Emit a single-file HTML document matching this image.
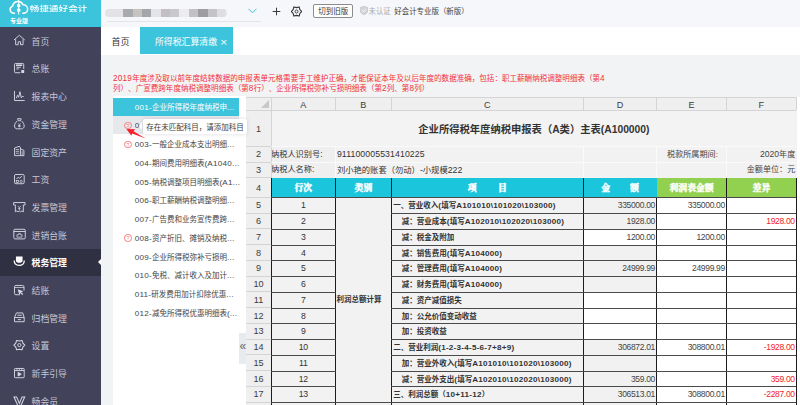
<!DOCTYPE html>
<html lang="zh-CN">
<head>
<meta charset="utf-8">
<title>所得税汇算清缴</title>
<style>
*{box-sizing:border-box;margin:0;padding:0}
html,body{width:800px;height:405px;overflow:hidden;background:#f2f3f5;text-spacing-trim:space-all;font-family:"Liberation Sans","Noto Sans CJK SC",sans-serif;-webkit-text-size-adjust:none}
body{position:relative;color:#333}
.abs{position:absolute}
#side{position:absolute;left:0;top:0;width:101px;height:405px;background:#42425b}
#logo{position:absolute;left:0;top:0;width:101px;height:27px;background:#3cc4dc;color:#fff}
#logo .t1{position:absolute;left:29.8px;top:3.1px;font-size:9.5px;font-weight:500;line-height:11px;white-space:nowrap;letter-spacing:0.1px;transform:scaleY(.76);transform-origin:0 50%}
#logo .t2{position:absolute;left:10px;top:16.5px;font-size:6px;font-weight:700;line-height:8px;white-space:nowrap}
.mi{position:absolute;left:0;width:101px;height:27.7px;color:#c6c7d5;font-size:8.85px;line-height:27.7px;white-space:nowrap}
.mi span{position:absolute;left:31.6px;top:1.6px}
.mi svg{position:absolute;left:13.8px;top:8.3px;width:10.7px;height:10.2px;stroke:#d6d7e2;fill:none;stroke-width:1;overflow:visible}
.mi.on{background:#2f3042;color:#fff;font-weight:700}
.mi.on svg{stroke:#fff}
.mi.on:after{content:"";position:absolute;right:0;top:10.4px;border:3.2px solid transparent;border-right:3.8px solid #fff;border-left:0}
#top{position:absolute;left:101px;top:0;width:699px;height:27px;background:#f5f7fa}
#top .b{position:absolute;top:8.5px;height:8.5px;filter:blur(.7px)}
#top .btn{position:absolute;left:212.3px;top:3.6px;width:40px;height:14.8px;border:1px solid #8c8c8c;border-radius:2px;font-size:7.5px;line-height:13.8px;text-align:center;color:#333;background:#fff;white-space:nowrap}
#top .t{position:absolute;top:0;line-height:23px;font-size:7.45px;white-space:nowrap}
#tabs{position:absolute;left:101px;top:27px;width:699px;height:27.6px;background:#fff}
#tabs .home{position:absolute;left:10.5px;top:0;line-height:30.2px;font-size:9px;color:#333}
#tabs .act{position:absolute;left:39px;top:0;width:93px;height:26.6px;background:#3cc4dc;color:#fff;font-size:8.9px;line-height:30.2px;overflow:hidden;padding-left:15px;white-space:nowrap}
#tabs .act i{font-style:normal;font-size:9.5px;margin-left:2.5px;line-height:10px;font-family:"DejaVu Sans",sans-serif}
.warn{position:absolute;left:113px;top:73.5px;width:520px;font-size:7.56px;line-height:10.7px;color:#f3303a;white-space:nowrap}
#list{position:absolute;left:113.2px;top:96px;width:132.6px;height:309px;background:#fff}
.li{position:absolute;left:0;width:125.8px;height:18.73px;line-height:20.8px;font-size:7.5px;color:#444;white-space:nowrap}
.li span{position:absolute;left:21.5px;top:0}
.li span span{position:static}
.li.hov>span{width:4.9px;overflow:hidden}
.li.on{background:#3cc4dc;color:#fff}
.li.hov{background:#e6e8eb;height:17.6px;margin-top:-.1px}
.q{position:absolute;left:11.1px;top:5.4px;width:7.4px;height:7.4px;border:0.7px solid #f9797d;border-radius:50%;color:#f9797d;font-size:5.2px;line-height:6.2px;text-align:center;font-style:normal}
#tip{position:absolute;left:142.7px;top:119.2px;width:104.8px;height:14.9px;background:#fff;border-radius:2px;box-shadow:0 0 4px rgba(0,0,0,.15);font-size:7.5px;line-height:17.2px;color:#3c3c3c;padding-left:3.5px;white-space:nowrap}
#tip:before{content:"";position:absolute;left:-3.7px;top:3px;border:4.5px solid transparent;border-right:3.8px solid #fff;border-left:0}
#hand{position:absolute;left:239.2px;top:332.5px;width:6.8px;height:31.5px;background:#e8ebee;color:#666;font-size:12px;line-height:27.8px;text-align:left;text-indent:.2px;letter-spacing:-1px;z-index:3}
#sheet{position:absolute;left:246px;top:97px;width:554px;height:308px;background:#f2f2f2;overflow:hidden}
#sheet div{position:absolute;font-size:7.5px;color:#333;white-space:nowrap;overflow:hidden}
#sheet .hd{background:#efefef;text-align:center;color:#3c3c3c;font-size:9.1px}
#sheet .ln{background:#1c1c1c}
#sheet .lh{background:#4a4a4a}
#sheet .gl{background:#d4d4d4}
#sheet .w{background:#fff}
#sheet .num{text-align:right;padding-right:1.6px;font-size:8.5px;letter-spacing:-.33px;color:#444}
#sheet .ctr{text-align:center;font-size:8.7px;letter-spacing:-.2px}
#sheet .bd{font-weight:700}
#sheet .red{color:#f2222c}
#sheet .th{color:#fff;font-weight:900;-webkit-text-stroke:.35px #fff;text-align:center;font-family:"Liberation Serif","Noto Serif CJK SC",serif;font-size:8.8px}
.a{font-size:1.08em;letter-spacing:.25px}
.n{font-size:1.06em}
</style>
</head>
<body>
<div id="side">
<div id="logo"><svg class="abs" style="left:9px;top:0" width="20" height="15" viewBox="0 0 20 15"><path d="M6 13.300H4.500a3.700 3.700 0 0 1-.8-7.200 5.400 5.400 0 0 1 10.300-1.300 4.300 4.300 0 0 1 1.200 8.500h-2" fill="none" stroke="#fff" stroke-width="1.500"/><path d="M9.700 0v14.500" stroke="#fff" stroke-width="1"/><rect x="8" y="4" width="3.400" height="3.200" rx="1" fill="#fff"/><rect x="8" y="8.600" width="3.400" height="3.200" rx="1" fill="#fff"/></svg><div class="t1">畅捷通好会计</div><div class="t2">专业版</div></div>
<div class="mi" style="top:27.15px"><svg viewBox="0 0 11 11" preserveAspectRatio="none"><path d="M0 5.300L5.500 0.400l5.500 4.900"/><path d="M1.700 4.600v5.900h2.600V7.300h2.400v3.200h2.600V4.600"/></svg><span>首页</span></div>
<div class="mi" style="top:54.85px"><svg viewBox="0 0 11 11" preserveAspectRatio="none"><path d="M10 6.500V1.500a1 1 0 0 0-1-1H1.500a1 1 0 0 0-1 1v8a1 1 0 0 0 1 1H6.500"/><path d="M2 2.400h6.500" stroke-width="1.700"/><path d="M2.500 4.600h4.500M2.500 6.400h2.500"/><rect x="7.500" y="7.500" width="3" height="3.300" rx=".6" fill="#d6d7e2" stroke="none"/></svg><span>总账</span></div>
<div class="mi" style="top:82.55px"><svg viewBox="0 0 11 11" preserveAspectRatio="none"><path d="M0.500 0v10.300h10.500"/><path d="M2.400 7.800l1.200-3.300 1.200 2.300 1.300-6 1.400 6.500 1-1.300h1.500"/></svg><span>报表中心</span></div>
<div class="mi" style="top:110.25px"><svg viewBox="0 0 11 11" preserveAspectRatio="none"><path d="M3.600 -.3h3.800l-.8 2.200h-2.200z"/><path d="M3.400 2C1.600 3.600.5 5.800.5 7.600c0 1.800 1.100 3 2.800 3h4.400c1.700 0 2.800-1.200 2.800-3 0-1.800-1.100-4-2.900-5.600"/><path d="M4.200 4.800l1.300 1.500 1.300-1.500M5.500 6.300v2.600M4.200 7h2.600M4.200 8.200h2.600" stroke-width=".8"/></svg><span>资金管理</span></div>
<div class="mi" style="top:137.95px"><svg viewBox="0 0 11 11" preserveAspectRatio="none"><path d="M0.600 10.400V2.200L5.200 .4l1.400 .9v9.100z"/><path d="M1.900 3.800h3.200M1.900 5.800h3.200M1.900 7.800h3.200" stroke-width=".8"/><path d="M6.600 3.200l3.600 1.500v5.700H6.600"/><path d="M8.400 5.600v4.400" stroke-width=".8"/></svg><span>固定资产</span></div>
<div class="mi" style="top:165.65px"><svg viewBox="0 0 11 11" preserveAspectRatio="none"><rect x="0.500" y="0.500" width="10" height="10" rx="1.500"/><path d="M2.500 5.500l1.800-2 1.200 1.200L8 2.500"/><rect x="2.300" y="7" width="2.200" height="2" stroke-width=".8"/><circle cx="7.400" cy="8" r="1.200" stroke-width=".8"/></svg><span>工资</span></div>
<div class="mi" style="top:193.35px"><svg viewBox="0 0 11 11" preserveAspectRatio="none"><path d="M-.4 .6h11.800v2.600H9.600v7.400l-1.400-1-1.400 1-1.300-1-1.300 1-1.400-1-1.400 1V3.200H-.4z"/><path d="M4 4.400l1.500 1.800L7 4.400M5.500 6.200v2.600M4.200 7.200h2.600" stroke-width=".8"/></svg><span>发票管理</span></div>
<div class="mi" style="top:221.05px"><svg viewBox="0 0 11 11" preserveAspectRatio="none"><rect x="-.2" y="0.300" width="11.800" height="10.400" rx="1.300"/><path d="M-.2 2.700h11.800"/><path d="M3 8.800V6.200h1.800V4.800h1.600v1.400h1.800v2.600z" stroke-width=".8"/></svg><span>进销台账</span></div>
<div class="mi on" style="top:248.75px"><svg viewBox="0 0 11 11" preserveAspectRatio="none"><path d="M2 -.5h6.800v4.800c0 2.600-6.800 2.600-6.800 0z" fill="#fff" stroke="none"/><path d="M0.200 3.800c0 3.600 2.400 5.200 5.200 5.200s5.200-1.600 5.200-5.200" stroke-width="1.300"/></svg><span>税务管理</span></div>
<div class="mi" style="top:276.45px"><svg viewBox="0 0 11 11" preserveAspectRatio="none"><path d="M10.300 6V2A1.500 1.500 0 0 0 8.800 .5H2A1.500 1.500 0 0 0 .5 2v7A1.500 1.500 0 0 0 2 10.500H6"/><path d="M.5 2.700h9.800" stroke-width=".8"/><path d="M3.800 4.600l5.800 2.200-2.200 .9 2.100 2.100-1 1-2.100-2.100-.9 2.200z" fill="#d6d7e2" stroke="none"/></svg><span>结账</span></div>
<div class="mi" style="top:304.15px"><svg viewBox="0 0 11 11" preserveAspectRatio="none"><path d="M2.500 1h6.500l1.500 5v4.500H.5V6zM.5 6h10M3.500 3.500h4.500M4 8.200h3"/></svg><span>归档管理</span></div>
<div class="mi" style="top:331.85px"><svg viewBox="0 0 11 11" preserveAspectRatio="none"><path d="M11.10 5.50 L9.14 7.68 L8.30 10.54 L5.50 9.87 L2.70 10.54 L1.86 7.68 L-0.10 5.50 L1.86 3.32 L2.70 0.46 L5.50 1.13 L8.30 0.46 L9.14 3.32Z" stroke-linejoin="round" stroke-width="1.100"/><circle cx="5.500" cy="5.500" r="1.700"/></svg><span>设置</span></div>
<div class="mi" style="top:359.55px"><svg viewBox="0 0 11 11" preserveAspectRatio="none"><rect x="0.500" y="0.500" width="10" height="10" rx="0.800"/><path d="M0.500 2.800h10"/><path d="M4.200 4.700l3.300 2-3.300 2z" fill="#d6d7e2"/><path d="M3 .5v2.300M5.500 .5v2.300M8 .5v2.300" stroke-width=".8"/></svg><span>新手引导</span></div>
<div class="mi" style="top:387.25px"><svg viewBox="0 0 11 11" preserveAspectRatio="none"><path d="M0 1h2.700l2.800 7 2.800-7H11L6.800 11H4.200z" stroke-width="1.100"/></svg><span>畅会员</span></div>
</div>
<div id="top">
<div class="b" style="left:4px;width:122px;background:#e3e3e6;border-radius:4px"></div>
<div class="b" style="left:21.5px;width:10.1px;background:#a9aaae"></div>
<div class="b" style="left:31.6px;width:9px;background:#c6c3c0"></div>
<div class="b" style="left:40.6px;width:9px;background:#a4a6ac"></div>
<div class="b" style="left:49.6px;width:10.2px;background:#e4e4e8"></div>
<div class="b" style="left:59.8px;width:9px;background:#c3bec2"></div>
<div class="b" style="left:68.8px;width:9px;background:#c9c8cc"></div>
<div class="b" style="left:77.8px;width:10.1px;background:#ececee"></div>
<div class="b" style="left:87.9px;width:9px;background:#c2c2c6"></div>
<div class="b" style="left:96.9px;width:10.1px;background:#9e9ea0"></div>
<div class="b" style="left:107px;width:9px;background:#c4c4c8"></div>
<div class="b" style="left:116px;width:8px;background:#dedee2"></div>
<div class="abs" style="left:6px;top:21px;width:153.500px;height:1px;background:#e3e5e9"></div>
<svg class="abs" style="left:147px;top:8px" width="9" height="6" viewBox="0 0 9 6"><path d="M0.500 0.800l4 4 4-4" fill="none" stroke="#3cc4dc" stroke-width="1"/></svg>
<svg class="abs" style="left:171px;top:7px" width="9" height="9" viewBox="0 0 9 9"><path d="M4.500 0.700v7.600M0.700 4.500h7.600" fill="none" stroke="#3a3a3a" stroke-width="1"/></svg>
<svg class="abs" style="left:190.200px;top:5.900px" width="11" height="11" viewBox="0 0 11 11"><path d="M10.80 5.50 L8.88 7.45 L8.15 10.09 L5.50 9.40 L2.85 10.09 L2.12 7.45 L0.20 5.50 L2.12 3.55 L2.85 0.91 L5.50 1.60 L8.15 0.91 L8.88 3.55Z" fill="none" stroke="#333" stroke-width="1.100" stroke-linejoin="round"/><circle cx="5.500" cy="5.500" r="1.500" fill="none" stroke="#333" stroke-width="0.900"/></svg>
<div class="btn">切到旧版</div>
<svg class="abs" style="left:258.500px;top:6px" width="8" height="9" viewBox="0 0 8 9"><path d="M4 0.300l3.700 1.200v3.200c0 2-1.600 3.300-3.700 4C1.900 8 .3 6.700.3 4.700V1.500z" fill="#d4d4d6" stroke="#bdbdc0" stroke-width="0.600"/><path d="M2.300 4.300l1.300 1.300 2.100-2.300" fill="none" stroke="#fff" stroke-width="0.900"/></svg>
<div class="t" style="left:267.500px;color:#aaa">未认证</div>
<div class="t" style="left:293.300px;color:#444">好会计专业版（新版）</div>
</div>
<div id="tabs"><div class="home">首页</div><div class="act">所得税汇算清缴<i>×</i></div></div>
<div class="warn"><span class="a">2019</span>年度涉及取以前年度结转数据的申报表单元格需要手工维护正确，才能保证本年及以后年度的数据准确，包括：职工薪酬纳税调整明细表（第<span class="a">4</span><br>列）、广宣费跨年度纳税调整明细表（第<span class="a">8</span>行）、企业所得税弥补亏损明细表（第<span class="a">2</span>列、第<span class="a">8</span>列）</div>
<div id="list">
<div class="li on" style="top:1.7px"><span><span class="a">001-</span>企业所得税年度纳税申<span class="a">...</span></span></div>
<div class="li hov" style="top:20.43px"><i class="q">?</i><span><span class="a">002-</span>收入费用明细表<span class="a">(A101...</span></span></div>
<div class="li" style="top:39.16px"><i class="q">?</i><span><span class="a">003-</span>一般企业成本支出明细<span class="a">...</span></span></div>
<div class="li" style="top:57.89px"><span><span class="a">004-</span>期间费用明细表<span class="a">(A1040...</span></span></div>
<div class="li" style="top:76.62px"><span><span class="a">005-</span>纳税调整项目明细表<span class="a">(A1...</span></span></div>
<div class="li" style="top:95.35px"><span><span class="a">006-</span>职工薪酬纳税调整明细<span class="a">...</span></span></div>
<div class="li" style="top:114.08px"><span><span class="a">007-</span>广告费和业务宣传费跨<span class="a">...</span></span></div>
<div class="li" style="top:132.81px"><i class="q">?</i><span><span class="a">008-</span>资产折旧、摊销及纳税<span class="a">...</span></span></div>
<div class="li" style="top:151.54px"><span><span class="a">009-</span>企业所得税弥补亏损明<span class="a">...</span></span></div>
<div class="li" style="top:170.27px"><span><span class="a">010-</span>免税、减计收入及加计<span class="a">...</span></span></div>
<div class="li" style="top:189px"><span><span class="a">011-</span>研发费用加计扣除优惠<span class="a">...</span></span></div>
<div class="li" style="top:207.73px"><span><span class="a">012-</span>减免所得税优惠明细表<span class="a">(...</span></span></div>
</div>
<div id="hand">«</div>
<div id="sheet">
<div class="" style="left:0px;top:0px;width:554px;height:1px;line-height:2.6px;background:#d4d4d4"> </div>
<div class="" style="left:0px;top:0px;width:0.7px;height:308px;line-height:309.6px;background:#d4d4d4"> </div>
<div class="hd" style="left:0px;top:1px;width:550.3px;height:12px;line-height:13.6px;"></div>
<div class="hd" style="left:25px;top:1px;width:64.6px;height:12px;line-height:13.6px;line-height:14.800px">A</div>
<div class="hd" style="left:89.6px;top:1px;width:55.6px;height:12px;line-height:13.6px;line-height:14.800px">B</div>
<div class="hd" style="left:145.2px;top:1px;width:192.2px;height:12px;line-height:13.6px;line-height:14.800px">C</div>
<div class="hd" style="left:337.4px;top:1px;width:73.2px;height:12px;line-height:13.6px;line-height:14.800px">D</div>
<div class="hd" style="left:410.6px;top:1px;width:69.9px;height:12px;line-height:13.6px;line-height:14.800px">E</div>
<div class="hd" style="left:480.5px;top:1px;width:69.8px;height:12px;line-height:13.6px;line-height:14.800px">F</div>
<div style="left:15px;top:3px;width:0;height:0;border:4.5px solid transparent;border-right-color:#c8c8c8;border-bottom-color:#c8c8c8"></div>
<div class="hd" style="left:0px;top:13px;width:25px;height:36.4px;line-height:38px;">1</div>
<div class="hd" style="left:0px;top:49.4px;width:25px;height:16px;line-height:17.6px;">2</div>
<div class="hd" style="left:0px;top:65.4px;width:25px;height:15.2px;line-height:16.8px;">3</div>
<div class="hd" style="left:0px;top:80.6px;width:25px;height:19.8px;line-height:21.4px;">4</div>
<div class="hd" style="left:0px;top:100.4px;width:25px;height:15.74px;line-height:17.34px;">5</div>
<div class="hd" style="left:0px;top:116.14px;width:25px;height:15.74px;line-height:17.34px;">6</div>
<div class="hd" style="left:0px;top:131.88px;width:25px;height:15.74px;line-height:17.34px;">7</div>
<div class="hd" style="left:0px;top:147.62px;width:25px;height:15.74px;line-height:17.34px;">8</div>
<div class="hd" style="left:0px;top:163.35px;width:25px;height:15.74px;line-height:17.34px;">9</div>
<div class="hd" style="left:0px;top:179.09px;width:25px;height:15.74px;line-height:17.34px;">10</div>
<div class="hd" style="left:0px;top:194.83px;width:25px;height:15.74px;line-height:17.34px;">11</div>
<div class="hd" style="left:0px;top:210.57px;width:25px;height:15.74px;line-height:17.34px;">12</div>
<div class="hd" style="left:0px;top:226.31px;width:25px;height:15.74px;line-height:17.34px;">13</div>
<div class="hd" style="left:0px;top:242.05px;width:25px;height:15.74px;line-height:17.34px;">14</div>
<div class="hd" style="left:0px;top:257.78px;width:25px;height:15.74px;line-height:17.34px;">15</div>
<div class="hd" style="left:0px;top:273.52px;width:25px;height:15.74px;line-height:17.34px;">16</div>
<div class="hd" style="left:0px;top:289.26px;width:25px;height:15.74px;line-height:17.34px;">17</div>
<div class="hd" style="left:0px;top:305px;width:25px;height:15.74px;line-height:17.34px;">18</div>
<div class="gl" style="left:24.5px;top:1px;width:1px;height:12px;line-height:13.6px;"></div>
<div class="gl" style="left:89.1px;top:1px;width:1px;height:12px;line-height:13.6px;"></div>
<div class="gl" style="left:144.7px;top:1px;width:1px;height:12px;line-height:13.6px;"></div>
<div class="gl" style="left:336.9px;top:1px;width:1px;height:12px;line-height:13.6px;"></div>
<div class="gl" style="left:410.1px;top:1px;width:1px;height:12px;line-height:13.6px;"></div>
<div class="gl" style="left:480px;top:1px;width:1px;height:12px;line-height:13.6px;"></div>
<div class="gl" style="left:549.8px;top:1px;width:1px;height:12px;line-height:13.6px;"></div>
<div class="gl" style="left:0px;top:12.5px;width:550.3px;height:1px;line-height:2.6px;"></div>
<div class="gl" style="left:24.5px;top:13px;width:1px;height:295px;line-height:296.6px;"></div>
<div class="gl" style="left:0px;top:48.9px;width:25px;height:1px;line-height:2.6px;"></div>
<div class="gl" style="left:0px;top:64.9px;width:25px;height:1px;line-height:2.6px;"></div>
<div class="gl" style="left:0px;top:80.1px;width:25px;height:1px;line-height:2.6px;"></div>
<div class="gl" style="left:0px;top:99.9px;width:25px;height:1px;line-height:2.6px;"></div>
<div class="gl" style="left:0px;top:115.64px;width:25px;height:1px;line-height:2.6px;"></div>
<div class="gl" style="left:0px;top:131.38px;width:25px;height:1px;line-height:2.6px;"></div>
<div class="gl" style="left:0px;top:147.12px;width:25px;height:1px;line-height:2.6px;"></div>
<div class="gl" style="left:0px;top:162.85px;width:25px;height:1px;line-height:2.6px;"></div>
<div class="gl" style="left:0px;top:178.59px;width:25px;height:1px;line-height:2.6px;"></div>
<div class="gl" style="left:0px;top:194.33px;width:25px;height:1px;line-height:2.6px;"></div>
<div class="gl" style="left:0px;top:210.07px;width:25px;height:1px;line-height:2.6px;"></div>
<div class="gl" style="left:0px;top:225.81px;width:25px;height:1px;line-height:2.6px;"></div>
<div class="gl" style="left:0px;top:241.55px;width:25px;height:1px;line-height:2.6px;"></div>
<div class="gl" style="left:0px;top:257.28px;width:25px;height:1px;line-height:2.6px;"></div>
<div class="gl" style="left:0px;top:273.02px;width:25px;height:1px;line-height:2.6px;"></div>
<div class="gl" style="left:0px;top:288.76px;width:25px;height:1px;line-height:2.6px;"></div>
<div class="gl" style="left:0px;top:304.5px;width:25px;height:1px;line-height:2.6px;"></div>
<div class="bd" style="left:25.5px;top:13.5px;width:524.8px;height:35.9px;line-height:37.5px;text-align:center;font-size:10.3px;background:#f3f3f3">企业所得税年度纳税申报表（A类）主表(A100000)</div>
<div class="" style="left:25.5px;top:49.4px;width:64.1px;height:16px;line-height:17.6px;background:#efefef;font-size:8.2px;text-indent:-.5px">纳税人识别号:</div>
<div class="" style="left:90.9px;top:49.4px;width:246.5px;height:16px;line-height:17.6px;font-size:8.7px;letter-spacing:.12px">911100005531410225</div>
<div class="" style="left:25.5px;top:65.4px;width:64.1px;height:15.2px;line-height:16.8px;background:#efefef;font-size:8.2px;text-indent:-.5px">纳税人名称:</div>
<div class="" style="left:90.9px;top:65.4px;width:246.5px;height:15.2px;line-height:16.8px;font-size:8.3px">刘小艳的账套（勿动）<span class="n">-</span>小规模<span class="n">222</span></div>
<div class="num" style="left:410.6px;top:49.4px;width:62.9px;height:16px;line-height:17.6px;font-size:8.1px;letter-spacing:0">税款所属期间:</div>
<div class="num" style="left:480.5px;top:49.4px;width:70.4px;height:16px;line-height:17.6px;font-size:8.1px;letter-spacing:0"><span class="n">2020</span>年度</div>
<div class="num" style="left:480.5px;top:65.4px;width:70.4px;height:15.2px;line-height:16.8px;font-size:8.1px;letter-spacing:0">金额单位：元</div>
<div class="" style="left:89.1px;top:49.4px;width:1px;height:31.2px;line-height:32.8px;background:#fafafa"></div>
<div class="" style="left:336.9px;top:49.4px;width:1px;height:31.2px;line-height:32.8px;background:#fafafa"></div>
<div class="" style="left:410.1px;top:49.4px;width:1px;height:31.2px;line-height:32.8px;background:#fafafa"></div>
<div class="" style="left:480px;top:49.4px;width:1px;height:31.2px;line-height:32.8px;background:#fafafa"></div>
<div class="" style="left:25px;top:48.9px;width:525.3px;height:1px;line-height:2.6px;background:#fafafa"></div>
<div class="" style="left:25px;top:64.9px;width:525.3px;height:1px;line-height:2.6px;background:#fafafa"></div>
<div class="th" style="left:25px;top:80.6px;width:64.6px;height:19.8px;line-height:21.4px;background:#1bc5dc">行次</div>
<div class="th" style="left:89.6px;top:80.6px;width:55.6px;height:19.8px;line-height:21.4px;background:#1bc5dc">类别</div>
<div class="th" style="left:145.2px;top:80.6px;width:192.2px;height:19.8px;line-height:21.4px;background:#1bc5dc">项<span style="display:inline-block;width:21.5px"></span>目</div>
<div class="th" style="left:337.4px;top:80.6px;width:73.2px;height:19.8px;line-height:21.4px;background:#1bc5dc">金<span style="display:inline-block;width:20px"></span>额</div>
<div class="th" style="left:410.6px;top:80.6px;width:69.9px;height:19.8px;line-height:21.4px;background:#92d050">利润表金额</div>
<div class="th" style="left:480.5px;top:80.6px;width:69.8px;height:19.8px;line-height:21.4px;background:#92d050">差异</div>
<div class="ctr" style="left:25px;top:100.4px;width:64.6px;height:15.74px;line-height:17.34px;background:#f2f2f2">1</div>
<div class="bd" style="left:145.2px;top:100.4px;width:192.2px;height:15.74px;line-height:17.34px;background:#f2f2f2;padding-left:2px">一、营业收入<span class="a">(</span>填写<span class="a">A101010\101020\103000)</span></div>
<div class="num" style="left:337.4px;top:100.4px;width:73.2px;height:15.74px;line-height:17.34px;background:#f1f1f1">335000.00</div>
<div class="num w" style="left:410.6px;top:100.4px;width:69.9px;height:15.74px;line-height:17.34px;">335000.00</div>
<div class="num w red" style="left:480.5px;top:100.4px;width:69.8px;height:15.74px;line-height:17.34px;"></div>
<div class="ctr" style="left:25px;top:116.14px;width:64.6px;height:15.74px;line-height:17.34px;background:#f2f2f2">2</div>
<div class="bd" style="left:145.2px;top:116.14px;width:192.2px;height:15.74px;line-height:17.34px;background:#f2f2f2;padding-left:10.5px">减：营业成本<span class="a">(</span>填写<span class="a">A102010\102020\103000)</span></div>
<div class="num" style="left:337.4px;top:116.14px;width:73.2px;height:15.74px;line-height:17.34px;background:#f1f1f1">1928.00</div>
<div class="num w" style="left:410.6px;top:116.14px;width:69.9px;height:15.74px;line-height:17.34px;"></div>
<div class="num w red" style="left:480.5px;top:116.14px;width:69.8px;height:15.74px;line-height:17.34px;">1928.00</div>
<div class="ctr" style="left:25px;top:131.88px;width:64.6px;height:15.74px;line-height:17.34px;background:#f2f2f2">3</div>
<div class="bd" style="left:145.2px;top:131.88px;width:192.2px;height:15.74px;line-height:17.34px;background:#f2f2f2;padding-left:10.5px">减：税金及附加</div>
<div class="num w" style="left:337.4px;top:131.88px;width:73.2px;height:15.74px;line-height:17.34px;">1200.00</div>
<div class="num w" style="left:410.6px;top:131.88px;width:69.9px;height:15.74px;line-height:17.34px;">1200.00</div>
<div class="num w red" style="left:480.5px;top:131.88px;width:69.8px;height:15.74px;line-height:17.34px;"></div>
<div class="ctr" style="left:25px;top:147.62px;width:64.6px;height:15.74px;line-height:17.34px;background:#f2f2f2">4</div>
<div class="bd" style="left:145.2px;top:147.62px;width:192.2px;height:15.74px;line-height:17.34px;background:#f2f2f2;padding-left:10.5px">减：销售费用<span class="a">(</span>填写<span class="a">A104000)</span></div>
<div class="num" style="left:337.4px;top:147.62px;width:73.2px;height:15.74px;line-height:17.34px;background:#f1f1f1"></div>
<div class="num w" style="left:410.6px;top:147.62px;width:69.9px;height:15.74px;line-height:17.34px;"></div>
<div class="num w red" style="left:480.5px;top:147.62px;width:69.8px;height:15.74px;line-height:17.34px;"></div>
<div class="ctr" style="left:25px;top:163.35px;width:64.6px;height:15.74px;line-height:17.34px;background:#f2f2f2">5</div>
<div class="bd" style="left:145.2px;top:163.35px;width:192.2px;height:15.74px;line-height:17.34px;background:#f2f2f2;padding-left:10.5px">减：管理费用<span class="a">(</span>填写<span class="a">A104000)</span></div>
<div class="num" style="left:337.4px;top:163.35px;width:73.2px;height:15.74px;line-height:17.34px;background:#f1f1f1">24999.99</div>
<div class="num w" style="left:410.6px;top:163.35px;width:69.9px;height:15.74px;line-height:17.34px;">24999.99</div>
<div class="num w red" style="left:480.5px;top:163.35px;width:69.8px;height:15.74px;line-height:17.34px;"></div>
<div class="ctr" style="left:25px;top:179.09px;width:64.6px;height:15.74px;line-height:17.34px;background:#f2f2f2">6</div>
<div class="bd" style="left:145.2px;top:179.09px;width:192.2px;height:15.74px;line-height:17.34px;background:#f2f2f2;padding-left:10.5px">减：财务费用<span class="a">(</span>填写<span class="a">A104000)</span></div>
<div class="num" style="left:337.4px;top:179.09px;width:73.2px;height:15.74px;line-height:17.34px;background:#f1f1f1"></div>
<div class="num w" style="left:410.6px;top:179.09px;width:69.9px;height:15.74px;line-height:17.34px;"></div>
<div class="num w red" style="left:480.5px;top:179.09px;width:69.8px;height:15.74px;line-height:17.34px;"></div>
<div class="ctr" style="left:25px;top:194.83px;width:64.6px;height:15.74px;line-height:17.34px;background:#f2f2f2">7</div>
<div class="bd" style="left:145.2px;top:194.83px;width:192.2px;height:15.74px;line-height:17.34px;background:#f2f2f2;padding-left:10.5px">减：资产减值损失</div>
<div class="num w" style="left:337.4px;top:194.83px;width:73.2px;height:15.74px;line-height:17.34px;"></div>
<div class="num w" style="left:410.6px;top:194.83px;width:69.9px;height:15.74px;line-height:17.34px;"></div>
<div class="num w red" style="left:480.5px;top:194.83px;width:69.8px;height:15.74px;line-height:17.34px;"></div>
<div class="ctr" style="left:25px;top:210.57px;width:64.6px;height:15.74px;line-height:17.34px;background:#f2f2f2">8</div>
<div class="bd" style="left:145.2px;top:210.57px;width:192.2px;height:15.74px;line-height:17.34px;background:#f2f2f2;padding-left:10.5px">加：公允价值变动收益</div>
<div class="num w" style="left:337.4px;top:210.57px;width:73.2px;height:15.74px;line-height:17.34px;"></div>
<div class="num w" style="left:410.6px;top:210.57px;width:69.9px;height:15.74px;line-height:17.34px;"></div>
<div class="num w red" style="left:480.5px;top:210.57px;width:69.8px;height:15.74px;line-height:17.34px;"></div>
<div class="ctr" style="left:25px;top:226.31px;width:64.6px;height:15.74px;line-height:17.34px;background:#f2f2f2">9</div>
<div class="bd" style="left:145.2px;top:226.31px;width:192.2px;height:15.74px;line-height:17.34px;background:#f2f2f2;padding-left:10.5px">加：投资收益</div>
<div class="num w" style="left:337.4px;top:226.31px;width:73.2px;height:15.74px;line-height:17.34px;"></div>
<div class="num w" style="left:410.6px;top:226.31px;width:69.9px;height:15.74px;line-height:17.34px;"></div>
<div class="num w red" style="left:480.5px;top:226.31px;width:69.8px;height:15.74px;line-height:17.34px;"></div>
<div class="ctr" style="left:25px;top:242.05px;width:64.6px;height:15.74px;line-height:17.34px;background:#f2f2f2">10</div>
<div class="bd" style="left:145.2px;top:242.05px;width:192.2px;height:15.74px;line-height:17.34px;background:#f2f2f2;padding-left:2px">二、营业利润<span class="a">(1-2-3-4-5-6-7+8+9)</span></div>
<div class="num" style="left:337.4px;top:242.05px;width:73.2px;height:15.74px;line-height:17.34px;background:#f1f1f1">306872.01</div>
<div class="num w" style="left:410.6px;top:242.05px;width:69.9px;height:15.74px;line-height:17.34px;">308800.01</div>
<div class="num w red" style="left:480.5px;top:242.05px;width:69.8px;height:15.74px;line-height:17.34px;">-1928.00</div>
<div class="ctr" style="left:25px;top:257.78px;width:64.6px;height:15.74px;line-height:17.34px;background:#f2f2f2">11</div>
<div class="bd" style="left:145.2px;top:257.78px;width:192.2px;height:15.74px;line-height:17.34px;background:#f2f2f2;padding-left:10.5px">加：营业外收入<span class="a">(</span>填写<span class="a">A101010\101020\103000)</span></div>
<div class="num" style="left:337.4px;top:257.78px;width:73.2px;height:15.74px;line-height:17.34px;background:#f1f1f1"></div>
<div class="num w" style="left:410.6px;top:257.78px;width:69.9px;height:15.74px;line-height:17.34px;"></div>
<div class="num w red" style="left:480.5px;top:257.78px;width:69.8px;height:15.74px;line-height:17.34px;"></div>
<div class="ctr" style="left:25px;top:273.52px;width:64.6px;height:15.74px;line-height:17.34px;background:#f2f2f2">12</div>
<div class="bd" style="left:145.2px;top:273.52px;width:192.2px;height:15.74px;line-height:17.34px;background:#f2f2f2;padding-left:10.5px">减：营业外支出<span class="a">(</span>填写<span class="a">A102010\102020\103000)</span></div>
<div class="num" style="left:337.4px;top:273.52px;width:73.2px;height:15.74px;line-height:17.34px;background:#f1f1f1">359.00</div>
<div class="num w" style="left:410.6px;top:273.52px;width:69.9px;height:15.74px;line-height:17.34px;"></div>
<div class="num w red" style="left:480.5px;top:273.52px;width:69.8px;height:15.74px;line-height:17.34px;">359.00</div>
<div class="ctr" style="left:25px;top:289.26px;width:64.6px;height:15.74px;line-height:17.34px;background:#f2f2f2">13</div>
<div class="bd" style="left:145.2px;top:289.26px;width:192.2px;height:15.74px;line-height:17.34px;background:#f2f2f2;padding-left:2px">三、利润总额（<span class="a">10+11-12</span>）</div>
<div class="num" style="left:337.4px;top:289.26px;width:73.2px;height:15.74px;line-height:17.34px;background:#f1f1f1">306513.01</div>
<div class="num w" style="left:410.6px;top:289.26px;width:69.9px;height:15.74px;line-height:17.34px;">308800.01</div>
<div class="num w red" style="left:480.5px;top:289.26px;width:69.8px;height:15.74px;line-height:17.34px;">-2287.00</div>
<div class="ctr" style="left:25px;top:305px;width:64.6px;height:15.74px;line-height:17.34px;background:#f2f2f2"></div>
<div class="bd" style="left:145.2px;top:305px;width:192.2px;height:15.74px;line-height:17.34px;background:#f2f2f2;padding-left:10.5px"></div>
<div class="num" style="left:337.4px;top:305px;width:73.2px;height:15.74px;line-height:17.34px;background:#f1f1f1"></div>
<div class="num w" style="left:410.6px;top:305px;width:69.9px;height:15.74px;line-height:17.34px;"></div>
<div class="num w red" style="left:480.5px;top:305px;width:69.8px;height:15.74px;line-height:17.34px;"></div>
<div class="bd" style="left:89.6px;top:100.4px;width:55.6px;height:204.6px;line-height:206.2px;background:#f2f2f2;text-align:left;padding-left:1px">利润总额计算</div>
<div class="" style="left:89.6px;top:305px;width:55.6px;height:15.74px;line-height:17.34px;background:#f2f2f2"></div>
<div class="ln" style="left:25px;top:80.6px;width:1px;height:227.4px;line-height:229px;"></div>
<div class="ln" style="left:89px;top:80.6px;width:1px;height:227.4px;line-height:229px;"></div>
<div class="ln" style="left:145px;top:80.6px;width:1px;height:227.4px;line-height:229px;"></div>
<div class="ln" style="left:337px;top:80.6px;width:1px;height:227.4px;line-height:229px;"></div>
<div class="ln" style="left:410px;top:100.4px;width:1px;height:207.6px;line-height:209.2px;"></div>
<div class="ln" style="left:480px;top:80.6px;width:1px;height:227.4px;line-height:229px;"></div>
<div class="ln" style="left:550px;top:80.6px;width:1px;height:227.4px;line-height:229px;"></div>
<div class="lh" style="left:25px;top:99.5px;width:64.6px;height:1px;line-height:2.6px;"></div>
<div class="lh" style="left:145.2px;top:99.5px;width:405.1px;height:1px;line-height:2.6px;"></div>
<div class="lh" style="left:89.6px;top:99.5px;width:55.6px;height:1px;line-height:2.6px;"></div>
<div class="lh" style="left:25px;top:116px;width:64.6px;height:1px;line-height:2.6px;"></div>
<div class="lh" style="left:145.2px;top:116px;width:405.1px;height:1px;line-height:2.6px;"></div>
<div class="lh" style="left:25px;top:131.5px;width:64.6px;height:1px;line-height:2.6px;"></div>
<div class="lh" style="left:145.2px;top:131.5px;width:405.1px;height:1px;line-height:2.6px;"></div>
<div class="lh" style="left:25px;top:148px;width:64.6px;height:1px;line-height:2.6px;"></div>
<div class="lh" style="left:145.2px;top:148px;width:405.1px;height:1px;line-height:2.6px;"></div>
<div class="lh" style="left:25px;top:162.5px;width:64.6px;height:1px;line-height:2.6px;"></div>
<div class="lh" style="left:145.2px;top:162.5px;width:405.1px;height:1px;line-height:2.6px;"></div>
<div class="lh" style="left:25px;top:179px;width:64.6px;height:1px;line-height:2.6px;"></div>
<div class="lh" style="left:145.2px;top:179px;width:405.1px;height:1px;line-height:2.6px;"></div>
<div class="lh" style="left:25px;top:194.5px;width:64.6px;height:1px;line-height:2.6px;"></div>
<div class="lh" style="left:145.2px;top:194.5px;width:405.1px;height:1px;line-height:2.6px;"></div>
<div class="lh" style="left:25px;top:211px;width:64.6px;height:1px;line-height:2.6px;"></div>
<div class="lh" style="left:145.2px;top:211px;width:405.1px;height:1px;line-height:2.6px;"></div>
<div class="lh" style="left:25px;top:225.5px;width:64.6px;height:1px;line-height:2.6px;"></div>
<div class="lh" style="left:145.2px;top:225.5px;width:405.1px;height:1px;line-height:2.6px;"></div>
<div class="lh" style="left:25px;top:242px;width:64.6px;height:1px;line-height:2.6px;"></div>
<div class="lh" style="left:145.2px;top:242px;width:405.1px;height:1px;line-height:2.6px;"></div>
<div class="lh" style="left:25px;top:257.5px;width:64.6px;height:1px;line-height:2.6px;"></div>
<div class="lh" style="left:145.2px;top:257.5px;width:405.1px;height:1px;line-height:2.6px;"></div>
<div class="lh" style="left:25px;top:274px;width:64.6px;height:1px;line-height:2.6px;"></div>
<div class="lh" style="left:145.2px;top:274px;width:405.1px;height:1px;line-height:2.6px;"></div>
<div class="lh" style="left:25px;top:288.5px;width:64.6px;height:1px;line-height:2.6px;"></div>
<div class="lh" style="left:145.2px;top:288.5px;width:405.1px;height:1px;line-height:2.6px;"></div>
<div class="lh" style="left:25px;top:305px;width:64.6px;height:1px;line-height:2.6px;"></div>
<div class="lh" style="left:145.2px;top:305px;width:405.1px;height:1px;line-height:2.6px;"></div>
<div class="lh" style="left:89.6px;top:305px;width:55.6px;height:1px;line-height:2.6px;"></div>
<div class="" style="left:551px;top:0px;width:3px;height:308px;line-height:309.6px;background:#fff"></div>
</div>
<div id="tip">存在未匹配科目，请添加科目</div>
<svg class="abs" style="left:120px;top:125px" width="30" height="16" viewBox="120 125 30 16"><path d="M126.400 128.900L135.200 129.200L133.500 131.200L145.600 138.400L132.100 133.600L131.400 135.700Z" fill="#f5222d"/></svg>
</body>
</html>
